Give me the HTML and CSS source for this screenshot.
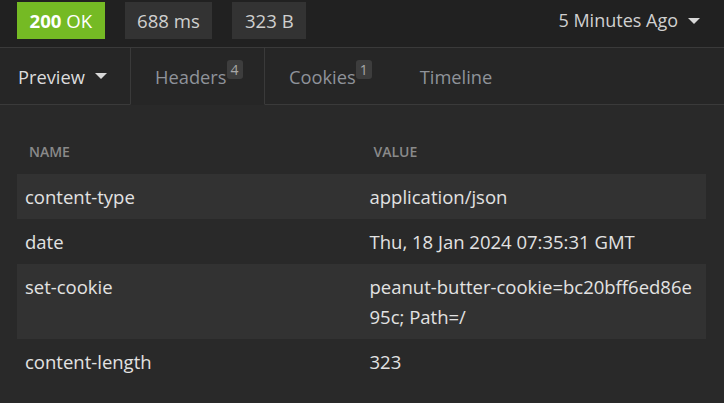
FILE: index.html
```html
<!DOCTYPE html>
<html>
<head>
<meta charset="utf-8">
<link rel="stylesheet" href="styles.css">
</head>
<body>
<div class="app">
  <div class="topbar">
    <div class="tag tag-ok"><b>200</b> OK</div>
    <div class="tag">688 ms</div>
    <div class="tag">323 B</div>
    <div class="spacer"></div>
    <div class="time">5 Minutes Ago <span class="caret"></span></div>
  </div>
  <div class="tabs">
    <div class="tab tab-preview">Preview <span class="caret"></span></div>
    <div class="tab tab-active">Headers<span class="badge">4</span></div>
    <div class="tab">Cookies<span class="badge">1</span></div>
    <div class="tab">Timeline</div>
    <div class="tab-fill"></div>
  </div>
  <div class="content">
    <table class="headers">
      <thead>
        <tr><th>Name</th><th>Value</th></tr>
      </thead>
      <tbody>
        <tr class="striped"><td>content-type</td><td>application/json</td></tr>
        <tr><td>date</td><td>Thu, 18 Jan 2024 07:35:31 GMT</td></tr>
        <tr class="striped"><td>set-cookie</td><td>peanut-butter-cookie=bc20bff6ed86e95c; Path=/</td></tr>
        <tr><td>content-length</td><td>323</td></tr>
      </tbody>
    </table>
  </div>
</div>
</body>
</html>
```
FILE: styles.css
```css
html, body {
  margin: 0;
  padding: 0;
  background: #292929;
  font-family: "Open Sans", "Noto Sans", sans-serif;
}
.app {
  width: 724px;
  height: 403px;
  overflow: hidden;
  background: #292929;
}
.topbar {
  height: 48px;
  box-sizing: border-box;
  background: #212121;
  border-bottom: 1px solid #3a3a3a;
  display: flex;
  align-items: flex-start;
  padding: 2px 0 0 17px;
  gap: 20px;
}
.tag {
  height: 37px;
  line-height: 37px;
  padding: 0 12.5px;
  background: #333333;
  color: #cfcfcf;
  font-size: 18.6px;
  white-space: nowrap;
}
.tag-ok {
  background: #75ba24;
  color: #ffffff;
}
.tag-ok b { font-weight: 700; }
.spacer { flex: 1; }
.time {
  color: #d0d0d0;
  font-size: 18px;
  line-height: 37px;
  padding-right: 24px;
  display: flex;
  align-items: center;
  gap: 10px;
}
.caret {
  display: inline-block;
  width: 0;
  height: 0;
  border-left: 6px solid transparent;
  border-right: 6px solid transparent;
  border-top: 6px solid #d8d8d8;
}
.tabs {
  height: 57px;
  display: flex;
  background: #262626;
}
.tab {
  box-sizing: border-box;
  height: 57px;
  display: flex;
  align-items: center;
  padding: 0 24px;
  font-size: 18.3px;
  color: #8f939a;
  border-bottom: 1px solid #3a3a3a;
  white-space: nowrap;
}
.tab-preview {
  width: 130px;
  padding-left: 18px;
  color: #dcdcdc;
  gap: 10px;
}
.tab-active {
  border-left: 1px solid #3a3a3a;
  border-right: 1px solid #3a3a3a;
  border-bottom-color: transparent;
  width: 135px;
}
.tab-fill {
  flex: 1;
  border-bottom: 1px solid #3a3a3a;
}
.badge {
  align-self: flex-start;
  margin-top: 12px;
  min-width: 16px;
  height: 19px;
  line-height: 19px;
  box-sizing: border-box;
  text-align: center;
  font-size: 14px;
  color: #a8a8a8;
  background: #3d3d3d;
  border-radius: 3px;
}
.content {
  padding: 24px 18px 0 17px;
}
.headers {
  width: 689px;
  border-collapse: collapse;
  table-layout: fixed;
}
.headers th {
  text-align: left;
  font-size: 14px;
  font-weight: 600;
  text-transform: uppercase;
  color: #8a8a8a;
  height: 45px;
  padding: 0 12px;
}
.headers td {
  font-size: 18.5px;
  line-height: 30px;
  color: #e2e2e2;
  padding: 8px 8px 7px 8px;
  vertical-align: top;
  word-break: break-all;
}
.striped td { background: #323232; }
```
